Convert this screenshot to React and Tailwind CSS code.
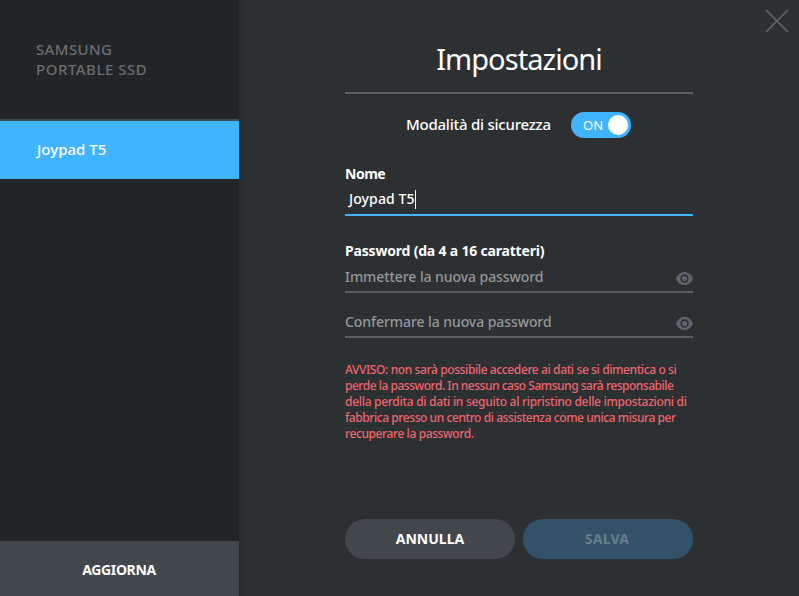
const WARNING_LINES = [
  { text: "AVVISO: non sarà possibile accedere ai dati se si dimentica o si", tracking: "tracking-[-0.39px]" },
  { text: "perde la password. In nessun caso Samsung sarà responsabile", tracking: "tracking-[-0.48px]" },
  { text: "della perdita di dati in seguito al ripristino delle impostazioni di", tracking: "tracking-[-0.29px]" },
  { text: "fabbrica presso un centro di assistenza come unica misura per", tracking: "tracking-[-0.43px]" },
  { text: "recuperare la password.", tracking: "tracking-[-0.4px]" }
];

const App = () => {
  return (
    <div className="flex w-[799px] h-[596px] overflow-hidden bg-[#2c3033] font-['Noto_Sans',sans-serif] font-medium text-white whitespace-nowrap">
      <Sidebar />

      <main className="relative flex-1 shadow-[inset_8px_0_6px_-6px_#282b2e]">
        <button className="absolute top-[9px] right-[10px]">
          <CloseIcon />
        </button>

        <div className="ml-[106px] w-[348px]">
          <h1 className="h-[94px] pt-[39px] border-b-2 border-[#5a5e64] text-center text-[29px] leading-[40px] font-normal tracking-[-0.95px]">
            Impostazioni
          </h1>

          <div className="flex items-center h-[26px] mt-[18px] pl-[61px]">
            <span className="w-[165px] -mt-[2px] text-[15px] leading-[24px] tracking-[-0.24px]">Modalità di sicurezza</span>
            <button className="flex items-center justify-between w-[60px] h-[26px] pl-3 pr-[3px] rounded-full bg-[#40b4ff]">
              <span className="text-[13px] leading-none font-normal">ON</span>
              <span className="size-5 rounded-full bg-white" />
            </button>
          </div>

          <div className="h-[78px] pt-[26px] border-b-2 border-[#40b4ff]">
            <label className="block h-[20px] text-[14px] leading-[20px] font-bold tracking-[-0.5px]">Nome</label>
            <div className="flex items-center h-[30px] pl-1">
              <span className="text-[14px] leading-[20px] tracking-[0.12px]">Joypad T5</span>
              <span className="w-px h-[19px] bg-white" />
            </div>
          </div>

          <label className="block h-[20px] mt-[25px] text-[14px] leading-[20px] font-bold tracking-[-0.19px]">
            Password (da 4 a 16 caratteri)
          </label>
          <PasswordField className="h-[32px] pt-[2px]" placeholder="Immettere la nuova password" />
          <PasswordField className="h-[45px] pt-[15px]" placeholder="Confermare la nuova password" />

          <div className="h-[80px] mt-[24px] text-[12px] leading-[16px] text-[#ee666a]">
            {WARNING_LINES.map(line => (
              <p key={line.text} className={line.tracking}>{line.text}</p>
            ))}
          </div>

          <div className="flex gap-2 mt-[77px] text-[14px] font-bold">
            <button className="w-[170px] h-10 pb-[2px] rounded-full bg-[#42474d]">ANNULLA</button>
            <button className="w-[170px] h-10 pb-[2px] pr-[2px] rounded-full bg-[#315268] text-[#687f90] tracking-[0.3px]">SALVA</button>
          </div>
        </div>
      </main>
    </div>
  );
};

const Sidebar = () => (
  <aside className="flex flex-col w-[239px] bg-[#212528]">
    <div className="h-[121px] pt-[39px] pl-9 border-b-2 border-[#40515c] text-[15px] leading-[20px] text-[#6b6e71]">
      <p className="tracking-[0.35px]">SAMSUNG</p>
      <p className="tracking-[0.5px]">PORTABLE SSD</p>
    </div>
    <div className="flex items-center h-[58px] pb-[2px] pl-[37px] bg-[#40b4ff] text-[15px]">
      <span>Joypad T5</span>
    </div>
    <button className="h-[55px] mt-auto pt-[2px] pr-[1px] bg-[#42474d] text-[14px] font-bold tracking-[-0.35px]">AGGIORNA</button>
  </aside>
);

const PasswordField = ({ className, placeholder }) => (
  <div className={`flex items-center justify-between border-b-2 border-[#5a5e64] ${className}`}>
    <span className="text-[14px] leading-[20px] tracking-[-0.07px] text-[#94979a]">{placeholder}</span>
    <EyeIcon />
  </div>
);

const EyeIcon = () => (
  <svg width="17" height="13" viewBox="0 0 17 13" className="mt-[2px]">
    <path
      fill="#5e646e"
      fillRule="evenodd"
      d="M8.5 0C4.6 0 1.4 2.6 0 6.5 1.4 10.4 4.6 13 8.5 13s7.1-2.6 8.5-6.5C15.6 2.6 12.4 0 8.5 0Zm0 10.7a4.2 4.2 0 1 1 0-8.4 4.2 4.2 0 0 1 0 8.4Z"
    />
    <circle cx="8.5" cy="6.5" r="2.6" fill="#5e646e" />
  </svg>
);

const CloseIcon = () => (
  <svg width="24" height="24" viewBox="0 0 24 24" stroke="#63676a" strokeWidth="1.6">
    <path d="M1 1 23 23M23 1 1 23" />
  </svg>
);

export default App;
